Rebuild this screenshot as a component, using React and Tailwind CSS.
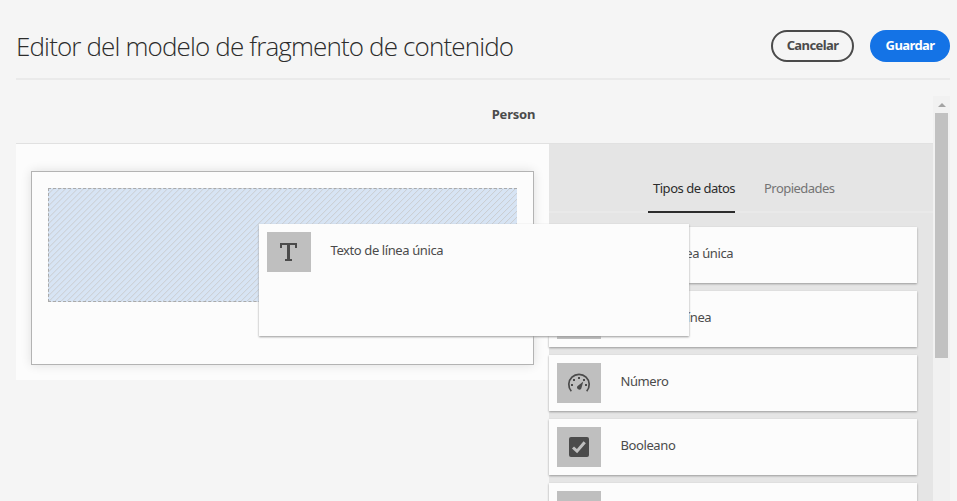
import React from "react";

function TextIcon() {
  return (
    <svg className="-translate-x-px" width="18" height="20" viewBox="0 0 18 20" fill="#4b4b4b">
      <path d="M1 1h17v5h-2V3h-5v14h2v2H6v-2h2V3H3v3H1z" />
    </svg>
  );
}

function GaugeIcon() {
  return (
    <svg width="24" height="20" viewBox="0 0 24 20" fill="none" stroke="#4b4b4b">
      <path d="M4.300 18.200A10.200 10.200 0 1 1 19.700 18.200" strokeWidth="1.700" />
      <g fill="#4b4b4b" stroke="none">
        <rect x="4" y="11" width="2" height="2" />
        <rect x="6" y="6" width="2" height="2" />
        <rect x="11" y="4" width="2" height="2" />
        <rect x="16" y="6" width="2" height="2" />
        <rect x="18" y="11" width="2" height="2" />
        <path d="M16.300 8.500l-2 7A2.300 2.300 0 1 1 10.300 13.200z" />
      </g>
    </svg>
  );
}

function CheckIcon() {
  return (
    <svg width="20" height="20" viewBox="0 0 20 20">
      <rect width="20" height="20" rx="2" fill="#4b4b4b" />
      <path d="M4 10.500l4 3.700L15.700 5.200" fill="none" stroke="#bfbfbf" strokeWidth="3" />
    </svg>
  );
}

function TypeContent({ icon, children }) {
  return (
    <div className="flex items-start pl-2 pt-2">
      <div className="flex h-10 w-11 shrink-0 items-center justify-center bg-[#bfbfbf]">{icon}</div>
      <span className="ml-[19.5px] mt-2 whitespace-nowrap text-[13px] leading-5 tracking-[-0.4px] text-[#4b4b4b]">{children}</span>
    </div>
  );
}

function TypeCard({ icon, children }) {
  return (
    <div className="h-14 w-[368px] shrink-0 bg-[#fcfcfc] shadow-[0_1px_2px_#999999]">
      <TypeContent icon={icon}>{children}</TypeContent>
    </div>
  );
}

export default function App() {
  return (
    <div className="relative flex h-[501px] w-[957px] flex-col overflow-hidden bg-[#f5f5f5] pl-4 pr-[7px] font-['Noto_Sans','Open_Sans',sans-serif] text-[#4b4b4b]">
      <header className="flex h-20 shrink-0 items-start border-b-2 border-[#eaeaea]">
        <h1 className="mt-7 flex-1 whitespace-nowrap font-['Open_Sans','Noto_Sans',sans-serif] text-[26px] font-light leading-9 tracking-[-0.86px] text-[#2c2c2c]">
          Editor del modelo de fragmento de contenido
        </h1>
        <button className="mt-[30px] h-8 w-[83px] rounded-full border-2 border-[#4b4b4b] pb-0.5 text-[13px] font-bold leading-5 tracking-[-0.6px]">Cancelar</button>
        <button className="ml-4 mt-[30px] h-8 w-20 rounded-full bg-[#1473e6] pb-0.5 text-[13px] font-bold leading-5 tracking-[-0.6px] text-white">Guardar</button>
      </header>
      <div className="flex min-h-0 flex-1">
        <main className="flex w-[917px] flex-col">
          <div className="flex h-16 shrink-0 justify-center border-b border-[#e1e1e1] pl-[78px] pt-6">
            <h2 className="text-[13px] font-bold leading-5 tracking-[-0.2px]">Person</h2>
          </div>
          <div className="flex min-h-0 flex-1 items-start">
            <section className="h-[236px] w-[533px] shrink-0 bg-[#fcfcfc] pl-[15px] pt-[27px]">
              <div className="h-[194px] w-[503px] border border-[#b3b3b3] p-4 shadow-[0_0_10px_rgba(0,0,0,0.12)]">
                <div className="h-[114px] w-[469px] border border-r-0 border-dashed border-[#aaa] bg-[#d7e4f4] bg-[repeating-linear-gradient(-45deg,#cacdd1_0px,#d7e4f4_0.75px,#d7e4f4_3.5px,#cacdd1_4.24px)]" />
              </div>
            </section>
            <section className="flex h-full flex-1 flex-col bg-[#e5e5e5]">
              <nav className="flex h-[69px] shrink-0 border-b-2 border-[#e9e9e9] pl-[99px]">
                <div className="h-[69px] w-[87px] shrink-0 whitespace-nowrap border-b-2 border-[#2c2c2c] pl-[5px] pt-[34px] text-[13px] leading-5 tracking-[-0.48px] text-[#2c2c2c]">Tipos de datos</div>
                <div className="ml-[29px] pt-[34px] text-[13px] leading-5 tracking-[-0.53px] text-[#747474]">Propiedades</div>
              </nav>
              <div className="flex flex-col gap-2 pt-3.5">
                <TypeCard icon={<TextIcon />}>Texto de línea única</TypeCard>
                <TypeCard icon={<TextIcon />}>Texto multilínea</TypeCard>
                <TypeCard icon={<GaugeIcon />}>Número</TypeCard>
                <TypeCard icon={<CheckIcon />}>Booleano</TypeCard>
                <TypeCard />
              </div>
            </section>
          </div>
        </main>
        <div className="mt-4 flex w-[17px] flex-col items-center bg-[#f1f1f1]">
          <div className="flex h-[17px] items-center">
            <svg width="8" height="4" viewBox="0 0 8 4" fill="#a3a3a3"><path d="M0 4L4 0L8 4z" /></svg>
          </div>
          <div className="h-[245px] w-[13px] bg-[#c1c1c1]" />
        </div>
      </div>
      <div className="absolute left-[259px] top-[224px] h-28 w-[430px] bg-[#fcfcfc] shadow-[0_1px_2px_#999999]">
        <TypeContent icon={<TextIcon />}>Texto de línea única</TypeContent>
      </div>
    </div>
  );
}
